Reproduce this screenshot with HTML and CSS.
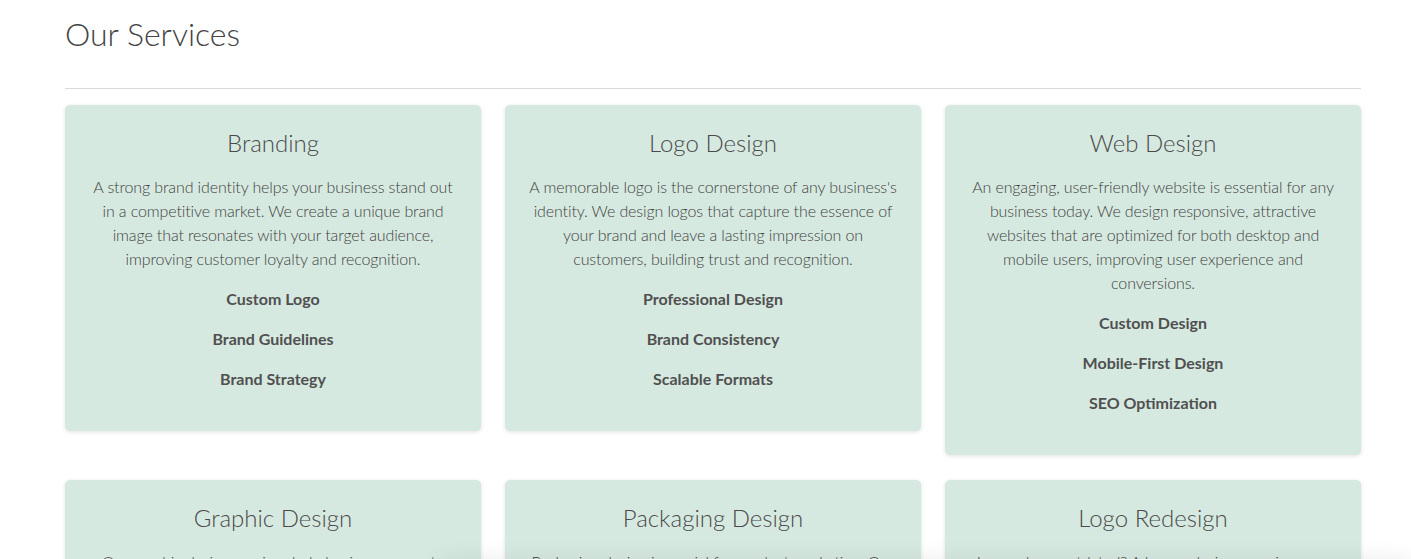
FILE: index.html
```html
<!DOCTYPE html>
<html lang="en">
<head>
<meta charset="utf-8">
<title>Our Services</title>
<link rel="stylesheet" href="styles.css">
</head>
<body>
<main class="page">
  <h1 class="page-title">Our Services</h1>
  <hr class="divider">
  <section class="services">
    <article class="card">
      <h3 class="card-title">Branding</h3>
      <p class="card-text">A strong brand identity helps your business stand out in a competitive market. We create a unique brand image that resonates with your target audience, improving customer loyalty and recognition.</p>
      <p class="feature">Custom Logo</p>
      <p class="feature">Brand Guidelines</p>
      <p class="feature">Brand Strategy</p>
    </article>
    <article class="card">
      <h3 class="card-title">Logo Design</h3>
      <p class="card-text">A memorable logo is the cornerstone of any business's identity. We design logos that capture the essence of your brand and leave a lasting impression on customers, building trust and recognition.</p>
      <p class="feature">Professional Design</p>
      <p class="feature">Brand Consistency</p>
      <p class="feature">Scalable Formats</p>
    </article>
    <article class="card">
      <h3 class="card-title">Web Design</h3>
      <p class="card-text">An engaging, user-friendly website is essential for any business today. We design responsive, attractive websites that are optimized for both desktop and mobile users, improving user experience and conversions.</p>
      <p class="feature">Custom Design</p>
      <p class="feature">Mobile-First Design</p>
      <p class="feature">SEO Optimization</p>
    </article>
    <article class="card">
      <h3 class="card-title">Graphic Design</h3>
      <p class="card-text">Our graphic design services help businesses create visually stunning materials that communicate their message clearly and effectively.</p>
      <p class="feature">Print Materials</p>
      <p class="feature">Social Media Graphics</p>
      <p class="feature">Marketing Collateral</p>
    </article>
    <article class="card">
      <h3 class="card-title">Packaging Design</h3>
      <p class="card-text">Packaging design is crucial for product marketing. Our team creates packaging that attracts attention and communicates your brand values.</p>
      <p class="feature">Custom Packaging</p>
      <p class="feature">Eco-Friendly Options</p>
      <p class="feature">Label Design</p>
    </article>
    <article class="card">
      <h3 class="card-title">Logo Redesign</h3>
      <p class="card-text">Is your logo outdated? A logo redesign can give your brand a fresh, modern look while keeping its core identity intact.</p>
      <p class="feature">Modern Look</p>
      <p class="feature">Brand Refresh</p>
      <p class="feature">Identity Retention</p>
    </article>
  </section>
</main>
<div class="bottom-shade"></div>
</body>
</html>
```
FILE: styles.css
```css
html, body {
  margin: 0;
  padding: 0;
  background: #ffffff;
}

body {
  font-family: Lato, "Open Sans", "Liberation Sans", sans-serif;
  color: #555555;
}

.page {
  padding: 15px 50px 40px 65px;
}

.page-title {
  margin: 0;
  font-size: 32px;
  line-height: 1.2;
  font-weight: 300;
  color: #444444;
}

.divider {
  margin: 35px 0 16px 0;
  border: 0;
  border-top: 1px solid #dadada;
  height: 0;
}

.services {
  display: grid;
  grid-template-columns: repeat(3, 1fr);
  column-gap: 24px;
  row-gap: 25px;
  align-items: start;
}

.card {
  background: #d6e9e0;
  border-radius: 5px;
  box-shadow: 0 1px 4px rgba(0, 0, 0, 0.12);
  padding: 24px 21px 24px 21px;
  text-align: center;
}

.card-title {
  margin: 0 0 17px 0;
  font-size: 24px;
  line-height: 1.2;
  font-weight: 300;
  color: #4a4a4a;
}

.card-text {
  margin: 0 0 16px 0;
  font-size: 16px;
  line-height: 24px;
  font-weight: 300;
  letter-spacing: -0.12px;
  color: #3f3f3f;
}

.feature {
  margin: 0 0 16px 0;
  font-size: 16px;
  line-height: 24px;
  font-weight: 700;
  color: #505050;
}

.bottom-shade {
  position: fixed;
  left: 440px;
  right: 0;
  top: 100%;
  height: 40px;
  background: #ffffff;
  box-shadow: 0 0 22px rgba(0, 0, 0, 0.08);
}
```
